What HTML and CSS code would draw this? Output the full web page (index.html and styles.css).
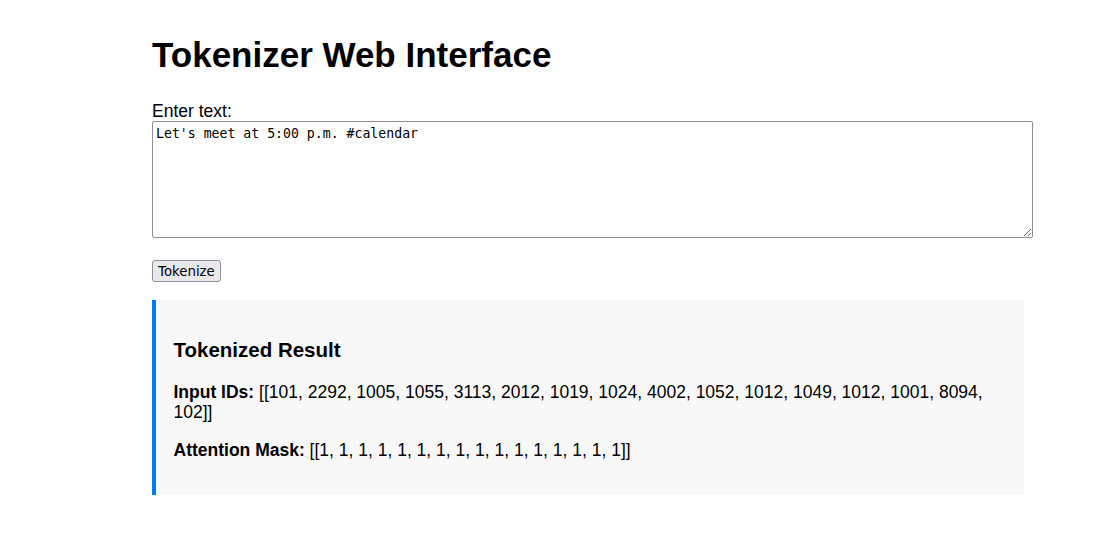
FILE: index.html
```html
<!DOCTYPE html>
<html lang="en">
<head>
<meta charset="utf-8">
<title>Tokenizer Web Interface</title>
<link rel="stylesheet" href="styles.css">
</head>
<body>
<div class="page">
  <h1 class="title">Tokenizer Web Interface</h1>
  <form class="form">
    <label class="label" for="text">Enter text:</label>
    <textarea class="input" id="text" rows="7">Let's meet at 5:00 p.m. #calendar</textarea>
    <button class="btn" type="button">Tokenize</button>
  </form>
  <div class="result">
    <h3 class="result-title">Tokenized Result</h3>
    <p class="result-line"><strong>Input IDs:</strong> [[101, 2292, 1005, 1055, 3113, 2012, 1019, 1024, 4002, 1052, 1012, 1049, 1012, 1001, 8094, 102]]</p>
    <p class="result-line"><strong>Attention Mask:</strong> [[1, 1, 1, 1, 1, 1, 1, 1, 1, 1, 1, 1, 1, 1, 1, 1]]</p>
  </div>
</div>
</body>
</html>
```
FILE: styles.css
```css
body {
  margin: 0;
  font-family: "Liberation Sans", Arial, sans-serif;
  font-size: 17.5px;
  color: #000;
  background: #fff;
}
.page {
  width: 872px;
  margin-left: 152px;
  padding-top: 21px;
}
.title {
  font-size: 35px;
  line-height: 40px;
  font-weight: bold;
  margin: 14px 0 26px;
}
.form {
  display: block;
}
.label {
  display: block;
  line-height: 20px;
}
.input {
  display: block;
  box-sizing: border-box;
  width: 881px;
  height: 117px;
  margin: 0 0 22px;
  padding: 4px 3px 2px;
  font-family: "DejaVu Sans Mono", monospace;
  font-size: 13.2px;
  border: 1px solid #8f8f9d;
  border-radius: 2px;
  resize: vertical;
}
.btn {
  display: block;
  font-family: "DejaVu Sans", sans-serif;
  font-size: 13.33px;
  height: 22px;
  padding: 1px 5px;
  border: 1px solid #8f8f9d;
  border-radius: 3px;
  background: #e9e9ed;
  color: #000;
}
.result {
  margin-top: 18px;
  background: #f8f8f8;
  border-left: 4px solid #007bff;
  padding: 17.5px;
}
.result-title {
  font-size: 20.5px;
  line-height: 23.5px;
  margin: 20.5px 0;
}
.result-line {
  margin: 0 0 17.5px;
  line-height: 20px;
}
```
